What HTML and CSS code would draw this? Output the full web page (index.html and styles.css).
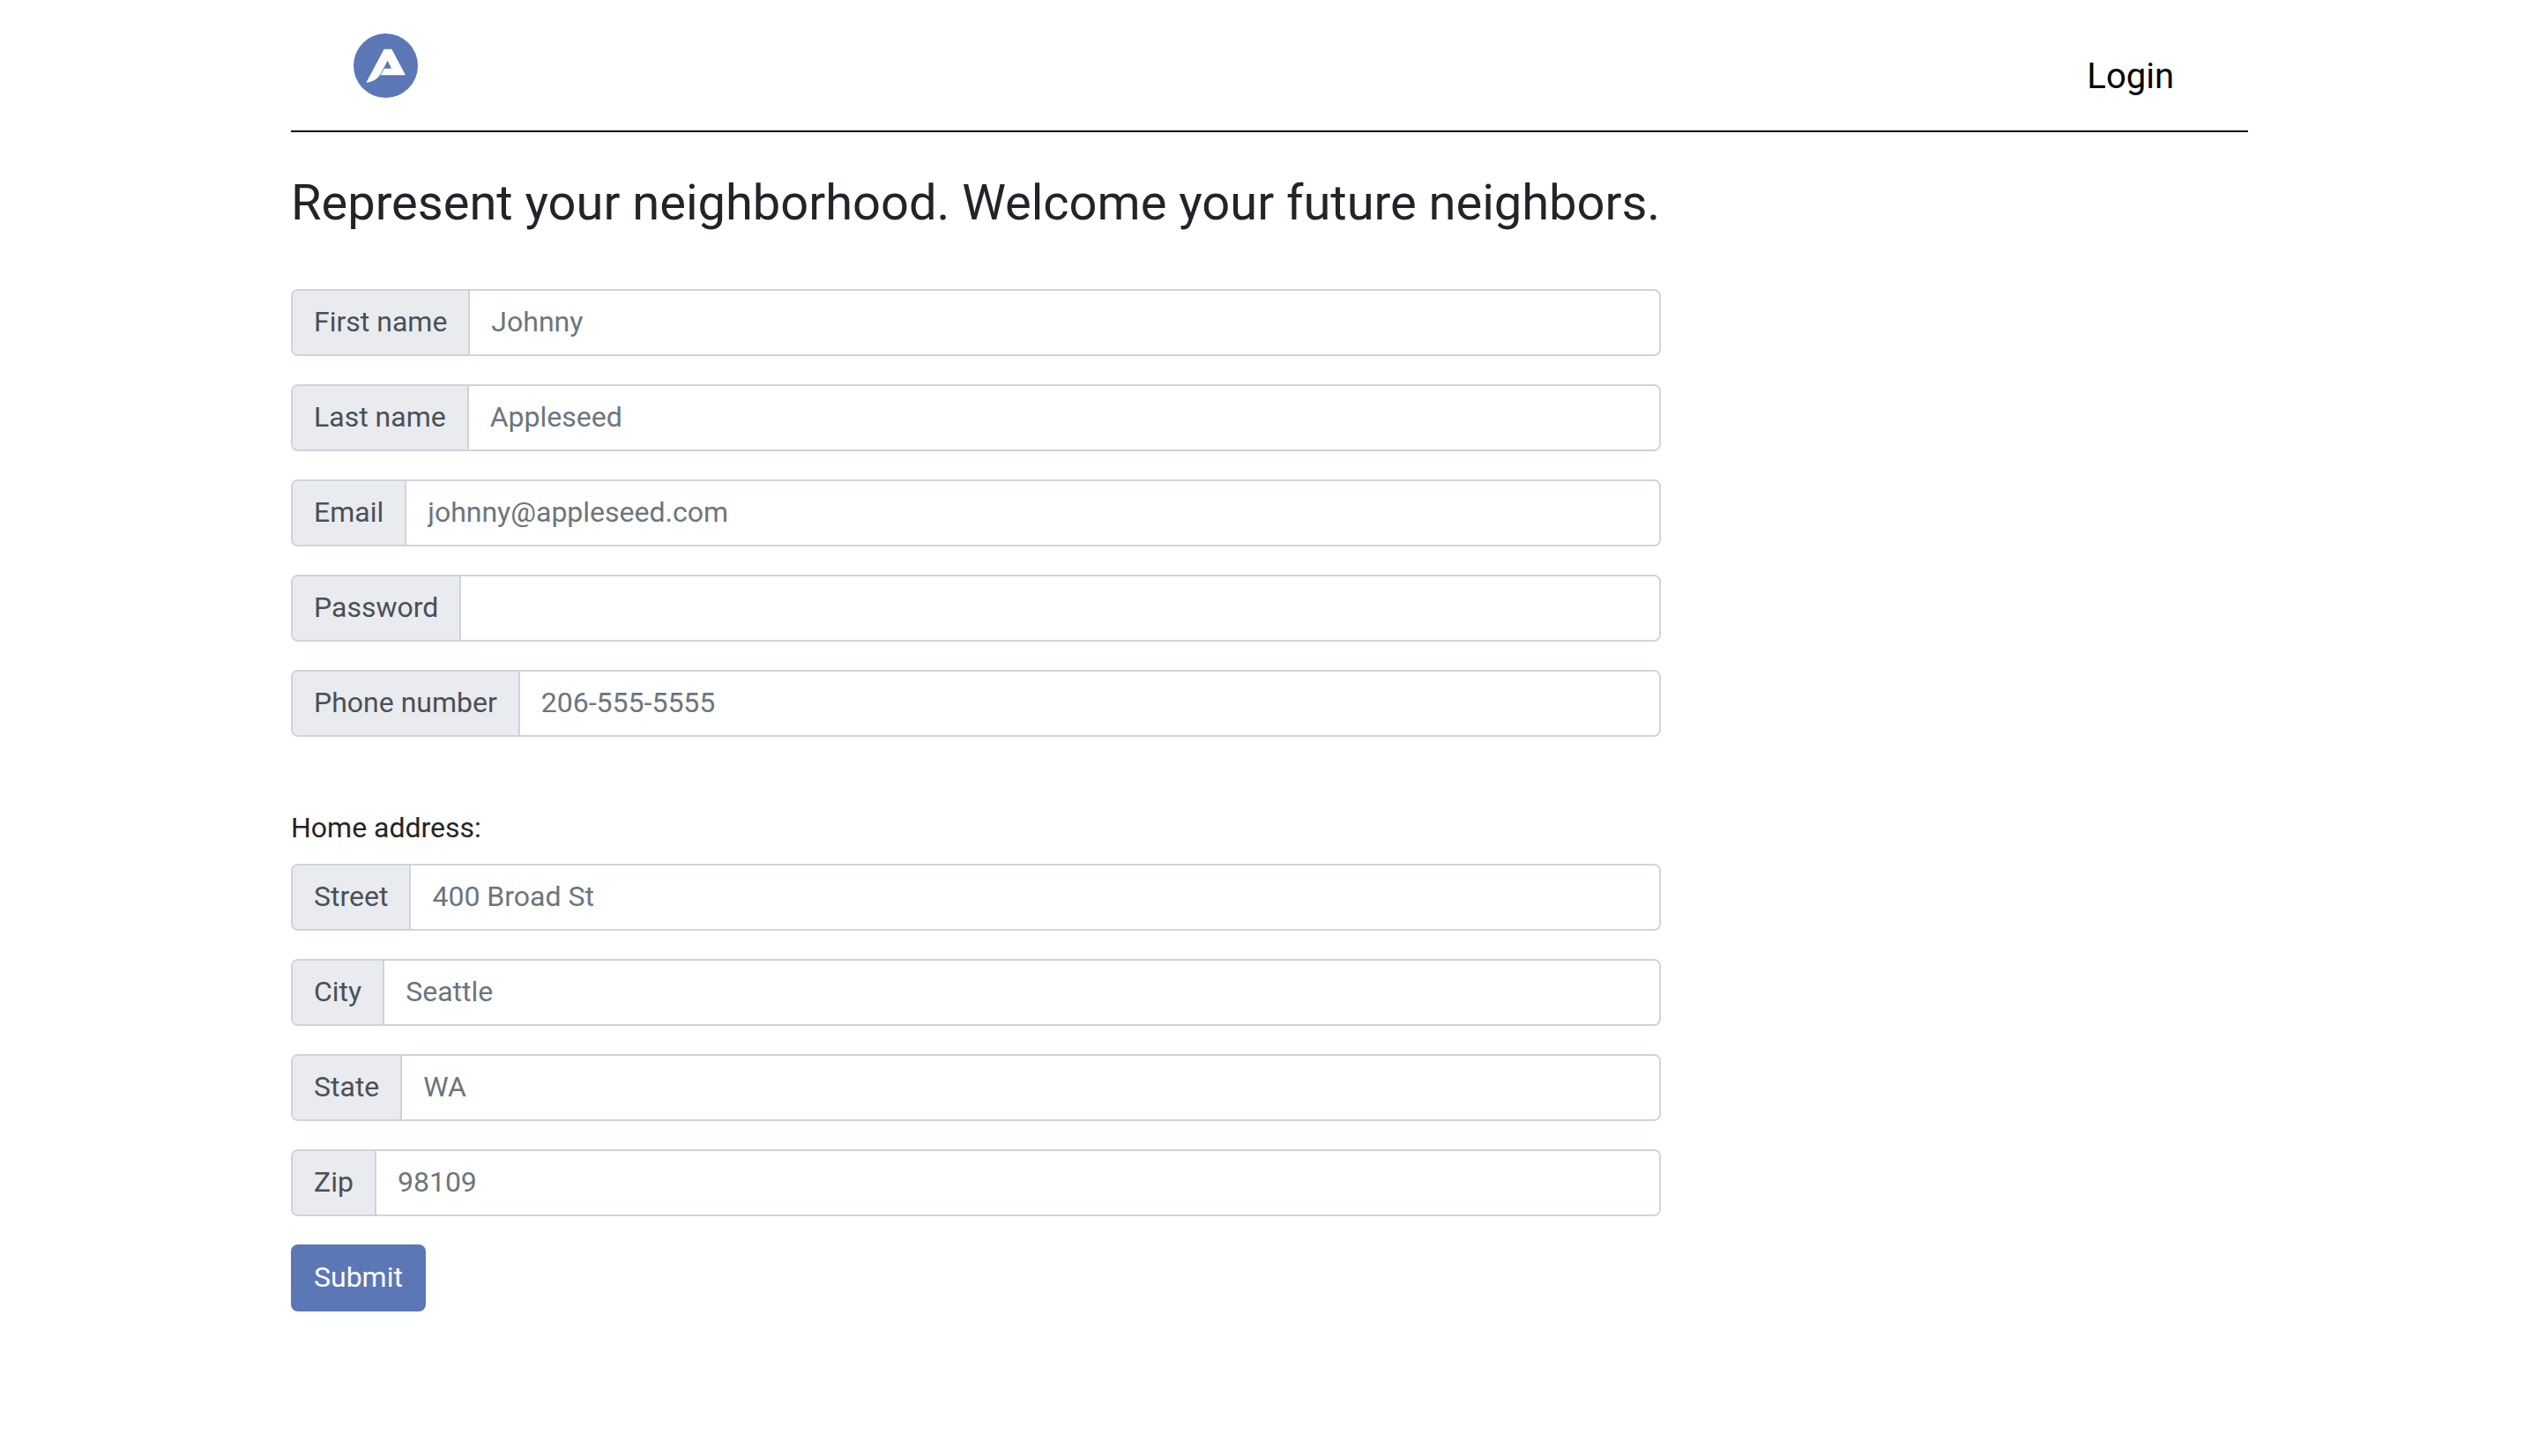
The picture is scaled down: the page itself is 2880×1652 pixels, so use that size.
FILE: index.html
```html
<!DOCTYPE html>
<html lang="en">
<head>
  <meta charset="utf-8">
  <title>Sign up</title>
  <link rel="stylesheet" href="styles.css">
</head>
<body>
  <div class="container">
    <header class="header">
      <a class="brand" href="#" aria-label="Home">
        <svg class="logo" viewBox="0 0 219 219" aria-hidden="true">
          <circle cx="109.500" cy="109.500" r="109.500" fill="#5b77b5"/>
          <path fill="#fff" fill-rule="evenodd" d="M104 53H130L177 142H91L104 119H129L116 92L98 127Q80 166 43 167Z"/>
          <path fill="none" stroke="#5b77b5" stroke-width="2" d="M104 118L88 146"/>
        </svg>
      </a>
      <a class="login" href="#">Login</a>
    </header>
    <main class="content">
      <h1 class="title">Represent your neighborhood. Welcome your future neighbors.</h1>
      <form class="form">
        <div class="field"><label class="tag" for="first">First name</label><input class="box" id="first" type="text" placeholder="Johnny"></div>
        <div class="field"><label class="tag" for="last">Last name</label><input class="box" id="last" type="text" placeholder="Appleseed"></div>
        <div class="field"><label class="tag" for="email">Email</label><input class="box" id="email" type="email" placeholder="johnny@appleseed.com"></div>
        <div class="field"><label class="tag" for="password">Password</label><input class="box" id="password" type="password"></div>
        <div class="field"><label class="tag" for="phone">Phone number</label><input class="box" id="phone" type="tel" placeholder="206-555-5555"></div>
        <p class="group-title">Home address:</p>
        <div class="field"><label class="tag" for="street">Street</label><input class="box" id="street" type="text" placeholder="400 Broad St"></div>
        <div class="field"><label class="tag" for="city">City</label><input class="box" id="city" type="text" placeholder="Seattle"></div>
        <div class="field"><label class="tag" for="state">State</label><input class="box" id="state" type="text" placeholder="WA"></div>
        <div class="field"><label class="tag" for="zip">Zip</label><input class="box" id="zip" type="text" placeholder="98109"></div>
        <button class="submit" type="submit">Submit</button>
      </form>
    </main>
  </div>
</body>
</html>
```
FILE: styles.css
```css
*,
*::before,
*::after {
  box-sizing: border-box;
}

body {
  margin: 0;
  background: #fff;
  color: #212529;
  font: 400 32px/48px Roboto, "Liberation Sans", sans-serif;
}

.container {
  max-width: 2280px;
  margin: 0 auto;
  padding: 0 30px;
}

.header {
  display: flex;
  align-items: flex-start;
  justify-content: space-between;
  padding: 38px 84px 31px 71px;
  border-bottom: 2px solid #000;
}

.brand,
.logo {
  display: block;
}

.logo {
  width: 73px;
  height: 73px;
}

.login {
  padding-top: 19px;
  color: #000;
  font-size: 40px;
  line-height: 60px;
  text-decoration: none;
}

.content {
  width: 70%;
  padding: 47px 0 64px;
}

.title {
  margin: 0 0 64px;
  font-size: 56px;
  font-weight: 400;
  line-height: 67px;
}

.field {
  display: flex;
  margin-bottom: 32px;
  border: 2px solid #ced4da;
  border-radius: 8px;
  overflow: hidden;
}

.field:focus-within {
  border-color: #5b77b5;
}

.tag {
  padding: 11px 24px 13px;
  border-right: 2px solid #ced4da;
  background: #e9ebef;
  color: #495057;
  white-space: nowrap;
}

.box {
  flex: 1;
  min-width: 0;
  padding: 11px 24px 13px;
  border: 0;
  outline: 0;
  background: #fff;
  color: #495057;
  font: inherit;
}

.box::placeholder {
  color: #6c757d;
  opacity: 1;
}

.group-title {
  margin: 79px 0 17px;
}

.submit {
  display: block;
  padding: 13px 26px 15px;
  border: 0;
  border-radius: 8px;
  background: #5b77b5;
  color: #fff;
  font: inherit;
  cursor: pointer;
}
```
